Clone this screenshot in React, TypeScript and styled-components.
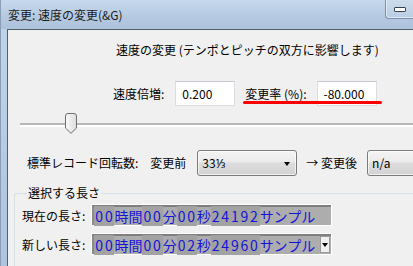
import styled, { createGlobalStyle } from "styled-components";

const GlobalStyle = createGlobalStyle`
  html, body {
    margin: 0;
    padding: 0;
    background: #f0f0f0;
    overflow: hidden;
  }
  * {
    box-sizing: border-box;
  }
`;

const uiFont = `"Noto Sans CJK JP", "Noto Sans", sans-serif`;

const Window = styled.div`
  width: 413px;
  height: 266px;
  display: flex;
  flex-direction: column;
  background: linear-gradient(180deg, #c2d5ea 0%, #aec4dd 100%);
  font-family: ${uiFont};
  font-size: 12px;
  color: #000;
  overflow: hidden;
`;

const TitleBar = styled.div`
  height: 29px;
  flex: none;
  display: flex;
  align-items: flex-start;
  justify-content: space-between;
  border-left: 1px solid #8a9db4;
  background: linear-gradient(180deg, #c6d8ec 0%, #b4c9e1 60%, #adc2db 100%);
`;

const TitleText = styled.div`
  padding: 6px 0 0 7px;
  font-size: 12px;
  line-height: 17px;
  color: #1b1b1b;
`;

const MinButton = styled.div`
  width: 28px;
  height: 19px;
  display: flex;
  align-items: center;
  justify-content: center;
  border-left: 1px solid #7d91a9;
  border-bottom: 1px solid #7d91a9;
  border-bottom-left-radius: 4px;
  background: linear-gradient(180deg, #cddced 0%, #b9cde3 100%);
  box-shadow: inset 1px -1px 0 rgba(255, 255, 255, 0.5);
`;

const MinGlyph = styled.div`
  width: 12px;
  height: 5px;
  margin-top: 1px;
  background: #fff;
  border: 1px solid #38414d;
  border-radius: 1px;
`;

const Frame = styled.div`
  flex: 1;
  display: flex;
  padding-left: 6px;
  border-left: 1px solid #8a9db4;
`;

const Client = styled.div`
  flex: 1;
  display: flex;
  flex-direction: column;
  background: #f0f0f0;
  border-left: 1px solid #55606e;
  border-top: 1px solid #55606e;
`;

const Heading = styled.div`
  margin: 11px 0 0 108px;
  line-height: 17px;
  white-space: nowrap;
`;

const FieldRow = styled.div`
  display: flex;
  align-items: center;
  margin-top: 23px;
  padding-left: 105px;
  height: 25px;
  white-space: nowrap;
  position: relative;
`;

const Label = styled.span<{ $ml?: number }>`
  margin-left: ${(p) => p.$ml ?? 0}px;
  line-height: 17px;
`;

const NumBox = styled.div<{ $ml?: number }>`
  width: 60px;
  height: 25px;
  margin-left: ${(p) => p.$ml ?? 0}px;
  background: #fff;
  border: 1px solid #d9dce1;
  border-top-color: #c5c9cf;
  padding: 3px 0 0 6px;
  line-height: 17px;
  font-size: 12px;
`;

const RedMark = styled.div`
  position: absolute;
  left: 235px;
  top: 20px;
  width: 139px;
  height: 3px;
  border-radius: 2px;
  background: #f00;
`;

const SliderRow = styled.div`
  position: relative;
  height: 21px;
  margin-top: 7px;
  margin-left: 12px;
`;

const Track = styled.div`
  position: absolute;
  left: 0;
  right: 0;
  top: 10px;
  height: 4px;
  border-top: 2px solid #b7b7b7;
  border-bottom: 2px solid #fff;
`;

const Thumb = styled.svg`
  position: absolute;
  left: 45px;
  top: 0;
`;

const RpmRow = styled.div`
  display: flex;
  align-items: center;
  margin-top: 15px;
  padding-left: 19px;
  height: 27px;
  white-space: nowrap;
`;

const Combo = styled.div<{ $w: number; $ml: number }>`
  width: ${(p) => p.$w}px;
  flex: none;
  height: 26px;
  margin-left: ${(p) => p.$ml}px;
  display: flex;
  align-items: center;
  justify-content: space-between;
  padding: 0 6px 0 4px;
  border: 1px solid #7b7b7b;
  border-radius: 3px;
  background: linear-gradient(180deg, #f4f4f4 0%, #ebebeb 45%, #dddddd 50%, #d3d3d3 100%);
  box-shadow: inset 0 0 0 1px rgba(255, 255, 255, 0.7);
  line-height: 17px;
`;

const Arrow = styled.span`
  width: 0;
  height: 0;
  border-left: 3.5px solid transparent;
  border-right: 3.5px solid transparent;
  border-top: 4px solid #000;
  margin-top: 2px;
`;

const Group = styled.fieldset`
  margin: 10px 0 0 6px;
  padding: 4px 0 0 7px;
  border: none;
  border-top: 1px solid #d5dfe5;
  border-left: 1px solid #d5dfe5;
  border-top-left-radius: 3px;
  min-width: 0;
  flex: 1;
  display: flex;
  flex-direction: column;
  gap: 7px;
`;

const Legend = styled.legend`
  padding: 0 1px;
  margin-left: 5px;
  line-height: 14px;
`;

const TimeRow = styled.div`
  display: flex;
  align-items: center;
  gap: 6px;
  white-space: nowrap;
`;

const TimeBox = styled.div`
  width: 241px;
  height: 22px;
  display: flex;
  align-items: center;
  border: 1px solid #fff;
  box-shadow: inset 0 2px 0 #7f7f7f, inset 2px 0 0 #8a8a8a;
  background: #adadad;
  padding: 2px 0 0 2px;
  font-family: "Noto Sans CJK JP", sans-serif;
  font-size: 14px;
  line-height: 18px;
  color: #1414d8;
  position: relative;
`;

const Digits = styled.span`
  background: #a2a2a2;
  letter-spacing: 1.8px;
  padding-left: 1px;
`;

const Drop = styled.span`
  position: absolute;
  right: 1px;
  top: 2px;
  width: 10px;
  height: 17px;
  background: #f0f0f0;
  border: 1px solid #9a9a9a;
  display: flex;
  align-items: center;
  justify-content: center;
  &::after {
    content: "";
    border-left: 3.5px solid transparent;
    border-right: 3.5px solid transparent;
    border-top: 4px solid #000;
  }
`;

type Part = [string, string];

const Time = ({ parts, drop }: { parts: Part[]; drop?: boolean }) => (
  <TimeBox>
    {parts.map(([d, u], i) => (
      <span key={i}>
        <Digits>{d}</Digits>
        <span>{u}</span>
      </span>
    ))}
    {drop && <Drop />}
  </TimeBox>
);

function App() {
  return (
    <Window>
      <GlobalStyle />
      <TitleBar>
        <TitleText>変更: 速度の変更(&amp;G)</TitleText>
        <MinButton>
          <MinGlyph />
        </MinButton>
      </TitleBar>
      <Frame>
        <Client>
          <Heading>速度の変更 (テンポとピッチの双方に影響します)</Heading>
          <FieldRow>
            <Label>速度倍増:</Label>
            <NumBox $ml={11}>0.200</NumBox>
            <Label $ml={10}>変更率 (%):</Label>
            <NumBox $ml={10}>-80.000</NumBox>
            <RedMark />
          </FieldRow>
          <SliderRow>
            <Track />
            <Thumb width="12" height="21" viewBox="0 0 12 21">
              <defs>
                <linearGradient id="tg" x1="0" y1="0" x2="1" y2="0">
                  <stop offset="0" stopColor="#fbfbfb" />
                  <stop offset="1" stopColor="#dcdcdc" />
                </linearGradient>
              </defs>
              <path
                d="M0.5 3 Q0.5 0.5 3 0.5 L9 0.5 Q11.5 0.5 11.5 3 L11.5 15 L6 20.3 L0.5 15 Z"
                fill="url(#tg)"
                stroke="#6f6f6f"
                strokeWidth="1"
              />
            </Thumb>
          </SliderRow>
          <RpmRow>
            <Label>標準レコード回転数:</Label>
            <Label $ml={12}>変更前</Label>
            <Combo $w={100} $ml={11}>
              <span>33⅓</span>
              <Arrow />
            </Combo>
            <Label $ml={9}>→ 変更後</Label>
            <Combo $w={80} $ml={10}>
              <span>n/a</span>
              <Arrow />
            </Combo>
          </RpmRow>
          <Group>
            <Legend>選択する長さ</Legend>
            <TimeRow>
              <Label>現在の長さ:</Label>
              <Time
                parts={[
                  ["00", "時間"],
                  ["00", "分"],
                  ["00", "秒"],
                  ["24192", "サンプル"],
                ]}
              />
            </TimeRow>
            <TimeRow>
              <Label>新しい長さ:</Label>
              <Time
                drop
                parts={[
                  ["00", "時間"],
                  ["00", "分"],
                  ["02", "秒"],
                  ["24960", "サンプル"],
                ]}
              />
            </TimeRow>
          </Group>
        </Client>
      </Frame>
    </Window>
  );
}

export default App;
